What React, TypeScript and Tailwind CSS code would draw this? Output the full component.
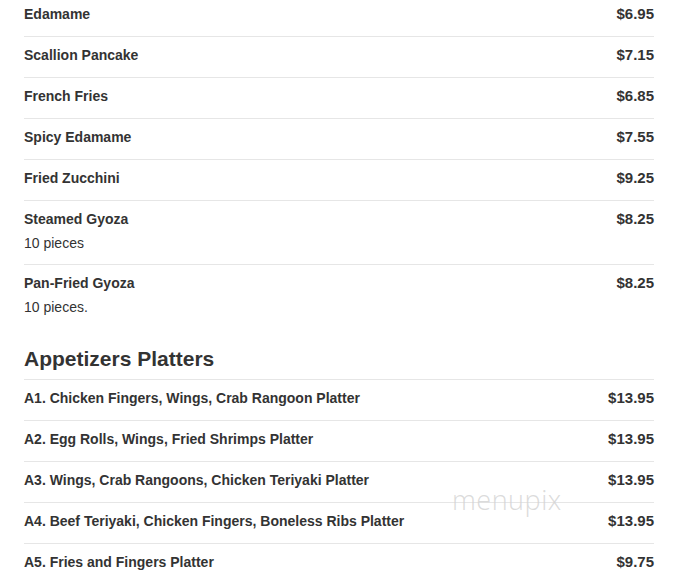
type Item = {
  name: string;
  price: string;
  note?: string;
};

const appetizers: Item[] = [
  { name: "Edamame", price: "$6.95" },
  { name: "Scallion Pancake", price: "$7.15" },
  { name: "French Fries", price: "$6.85" },
  { name: "Spicy Edamame", price: "$7.55" },
  { name: "Fried Zucchini", price: "$9.25" },
  { name: "Steamed Gyoza", price: "$8.25", note: "10 pieces" },
  { name: "Pan-Fried Gyoza", price: "$8.25", note: "10 pieces." },
];

const platters: Item[] = [
  { name: "A1. Chicken Fingers, Wings, Crab Rangoon Platter", price: "$13.95" },
  { name: "A2. Egg Rolls, Wings, Fried Shrimps Platter", price: "$13.95" },
  { name: "A3. Wings, Crab Rangoons, Chicken Teriyaki Platter", price: "$13.95" },
  { name: "A4. Beef Teriyaki, Chicken Fingers, Boneless Ribs Platter", price: "$13.95" },
  { name: "A5. Fries and Fingers Platter", price: "$9.75" },
];

function MenuRow({ item }: { item: Item }) {
  return (
    <li className="flex justify-between border-b border-[#e6e6e6] pt-2 pb-3 last:border-b-0">
      <div>
        <div className="text-[14px] leading-5 font-bold">{item.name}</div>
        {item.note && (
          <div className="mt-[5px] text-[14px] leading-[18px]">{item.note}</div>
        )}
      </div>
      <div className="text-[15px] leading-5 font-bold">{item.price}</div>
    </li>
  );
}

export default function App() {
  return (
    <div
      className="relative h-[584px] w-[685px] overflow-hidden bg-white text-[#333]"
      style={{ fontFamily: '"Liberation Sans", Arial, sans-serif' }}
    >
      <div className="-mt-1 ml-6 w-[630px]">
        <ul>
          {appetizers.map((item) => (
            <MenuRow key={item.name} item={item} />
          ))}
        </ul>

        <h2 className="mt-[19px] border-b border-[#e6e6e6] pb-2 text-[21px] leading-6 font-bold">
          Appetizers Platters
        </h2>
        <ul>
          {platters.map((item) => (
            <MenuRow key={item.name} item={item} />
          ))}
        </ul>
      </div>

      {/* watermark */}
      <div
        className="pointer-events-none absolute top-[482px] left-[452px] text-[27px] leading-9 font-thin tracking-[0.5px] text-[#d2d2d2]/80"
        style={{ fontFamily: '"Open Sans", Lato, sans-serif' }}
      >
        menupix
      </div>
    </div>
  );
}
